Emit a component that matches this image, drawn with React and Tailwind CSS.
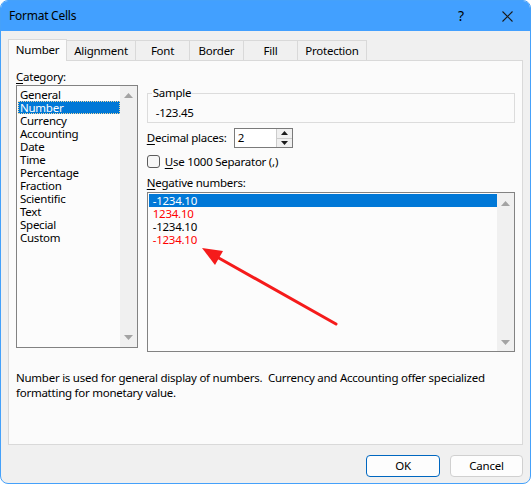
import React from "react";

const ScrollUp = () => (
  <svg width="9" height="5" viewBox="0 0 9 5"><path d="M4.5 0 L9 5 L0 5 Z" fill="#a3a3a3" /></svg>
);
const ScrollDown = () => (
  <svg width="9" height="5" viewBox="0 0 9 5"><path d="M0 0 L9 0 L4.5 5 Z" fill="#a3a3a3" /></svg>
);

const categories = [
  "General", "Number", "Currency", "Accounting", "Date", "Time",
  "Percentage", "Fraction", "Scientific", "Text", "Special", "Custom",
];

const negatives = [
  { t: "-1234.10", c: "text-white", sel: true },
  { t: "1234.10", c: "text-[#ff0000]" },
  { t: "-1234.10", c: "text-black" },
  { t: "-1234.10", c: "text-[#ff0000]" },
];

const tabs = [
  { t: "Alignment", w: "w-[69px]" },
  { t: "Font", w: "w-[54px]" },
  { t: "Border", w: "w-[54px]" },
  { t: "Fill", w: "w-[54px]" },
  { t: "Protection", w: "w-[69px]" },
];

export default function App() {
  return (
    <div className="relative w-[532px] h-[484px] bg-white overflow-hidden font-['Noto_Sans',sans-serif] text-[11.5px] tracking-[-0.25px] text-black">
      <div className="w-[531px] h-[484px] rounded-[8px] border border-[#45a1fa] bg-[#f0f0f0] flex flex-col overflow-hidden">
        {/* Title bar */}
        <div className="h-[30px] shrink-0 bg-[#42a0ff] flex items-center">
          <span className="pl-[8px] text-[12px] leading-[16px]">Format Cells</span>
          <div className="flex-1" />
          <div className="w-[46px] h-full flex items-center justify-center text-[14px] leading-none">?</div>
          <div className="w-[46px] h-full flex items-center justify-center">
            <svg width="11" height="11" viewBox="0 0 11 11">
              <path d="M0.5 0.5 L10.5 10.5 M10.5 0.5 L0.5 10.5" stroke="#1a1a1a" strokeWidth="1.1" />
            </svg>
          </div>
        </div>

        {/* Body */}
        <div className="flex-1 flex flex-col px-[7px] pt-[8px]">
          {/* Tabs */}
          <div className="flex items-end h-[21px] relative z-10">
            <div className="w-[59px] h-[22px] mb-[-1px] bg-[#fbfbfb] border border-b-0 border-[#d9d9d9] flex items-center justify-center pb-[2px]">
              Number
            </div>
            {tabs.map((tb) => (
              <div
                key={tb.t}
                className={`${tb.w} h-[20px] border border-b-0 border-l-0 border-[#d9d9d9] flex items-center justify-center`}
              >
                {tb.t}
              </div>
            ))}
          </div>

          {/* Panel */}
          <div className="w-[515px] h-[385px] border border-[#d9d9d9] bg-[#fbfbfb] pt-[9px] px-[7px] flex flex-col">
            <div className="flex gap-[9px]">
              {/* Left column */}
              <div className="w-[122px] flex flex-col">
                <div className="h-[14px] leading-[14px]"><span className="underline underline-offset-2">C</span>ategory:</div>
                <div className="mt-[1px] h-[263px] border border-[#828282] bg-[#fcfcfc] flex">
                  <div className="flex-1 pt-[2px] pl-[1px] flex flex-col">
                    {categories.map((c) =>
                      c === "Number" ? (
                        <div key={c} className="h-[13px] leading-[11px] pl-[1px] bg-[#0078d7] text-white border border-dotted border-[#f3d9a0]">
                          {c}
                        </div>
                      ) : (
                        <div key={c} className="h-[13px] leading-[13px] pl-[2px]">{c}</div>
                      )
                    )}
                  </div>
                  <div className="w-[17px] bg-[#f0f0f0] flex flex-col items-center justify-between pt-[7px] pb-[7px]">
                    <ScrollUp />
                    <ScrollDown />
                  </div>
                </div>
              </div>

              {/* Right column */}
              <div className="w-[369px] flex flex-col pt-[16px]">
                <fieldset className="border border-[#dcdcdc] pb-[2px]">
                  <legend className="ml-[4px] px-[1px] leading-[14px]">Sample</legend>
                  <div className="mt-[6px] pl-[8px] leading-[14px]">-123.45</div>
                </fieldset>

                <div className="mt-[5px] h-[20px] flex items-center">
                  <div className="w-[87px]"><span className="underline underline-offset-2">D</span>ecimal places:</div>
                  <div className="w-[59px] h-[20px] border border-[#7a7a7a] bg-white flex">
                    <div className="flex-1 pl-[3px] leading-[18px]">2</div>
                    <div className="w-[16px] flex flex-col border-l border-[#cccccc] bg-[#f0f0f0]">
                      <div className="flex-1 flex items-center justify-center border-b border-[#cccccc]">
                        <svg width="7" height="4" viewBox="0 0 7 4"><path d="M3.5 0 L7 4 L0 4 Z" fill="#1a1a1a" /></svg>
                      </div>
                      <div className="flex-1 flex items-center justify-center">
                        <svg width="7" height="4" viewBox="0 0 7 4"><path d="M0 0 L7 0 L3.5 4 Z" fill="#1a1a1a" /></svg>
                      </div>
                    </div>
                  </div>
                </div>

                <div className="mt-[7px] h-[13px] flex items-center gap-[5px]">
                  <div className="w-[13px] h-[13px] rounded-[3px] border border-[#5c5c5c] bg-[#f7f7f7]" />
                  <div className="leading-[14px]"><span className="underline underline-offset-2">U</span>se 1000 Separator (,)</div>
                </div>

                <div className="mt-[8px] leading-[14px]"><span className="underline underline-offset-2">N</span>egative numbers:</div>

                <div className="mt-[2px] h-[160px] border border-[#828282] bg-[#fcfcfc] flex">
                  <div className="flex-1 pt-[1px] pl-[1px] flex flex-col">
                    {negatives.map((n, i) => (
                      <div
                        key={i}
                        className={`h-[13px] leading-[13px] pl-[4px] ${n.c} ${n.sel ? "bg-[#0078d7]" : ""}`}
                      >
                        {n.t}
                      </div>
                    ))}
                  </div>
                  <div className="w-[17px] bg-[#f0f0f0] flex flex-col items-center justify-between pt-[8px] pb-[6px]">
                    <ScrollUp />
                    <ScrollDown />
                  </div>
                </div>
              </div>
            </div>

            <div className="mt-[18px] leading-[15px] whitespace-pre">
              <div>Number is used for general display of numbers.  Currency and Accounting offer specialized</div>
              <div>formatting for monetary value.</div>
            </div>
          </div>

          {/* Buttons */}
          <div className="mt-[10px] flex justify-end gap-[10px]">
            <div className="w-[74px] h-[22px] rounded-[4px] border border-[#0067c0] bg-[#fdfdfd] flex items-center justify-center">OK</div>
            <div className="w-[73px] h-[22px] rounded-[4px] border border-[#d0d0d0] bg-[#fdfdfd] flex items-center justify-center">Cancel</div>
          </div>
        </div>
      </div>

      {/* Red annotation arrow */}
      <svg className="absolute left-0 top-0 pointer-events-none" width="532" height="484" viewBox="0 0 532 484">
        <line x1="336" y1="324" x2="217" y2="257" stroke="#f51b1b" strokeWidth="3" strokeLinecap="round" />
        <polygon points="202,248 223,251 215,265" fill="#f51b1b" />
      </svg>
    </div>
  );
}
